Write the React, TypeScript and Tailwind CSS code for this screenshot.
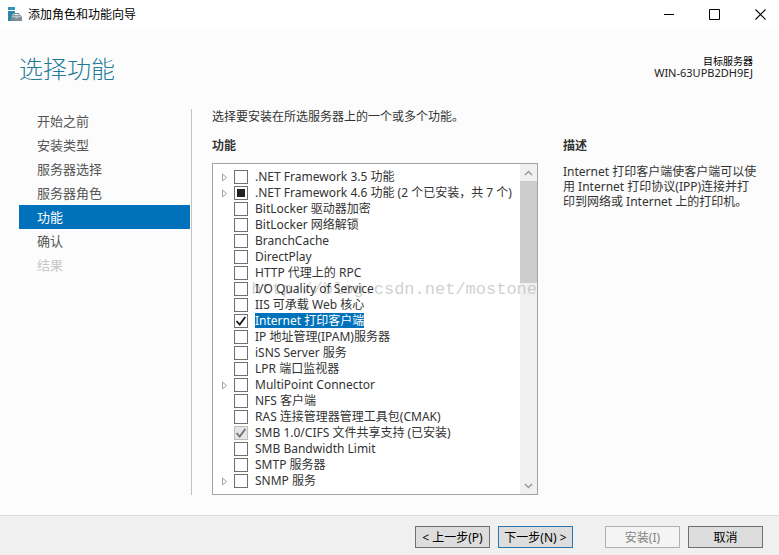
import { useEffect, useRef } from "react";

type Feature = {
  label: string;
  expandable?: boolean;
  checked?: boolean;
  partial?: boolean;
  installed?: boolean;
  selected?: boolean;
};

const steps = ["开始之前", "安装类型", "服务器选择", "服务器角色", "功能", "确认", "结果"];

const features: Feature[] = [
  { label: ".NET Framework 3.5 功能", expandable: true },
  { label: ".NET Framework 4.6 功能 (2 个已安装，共 7 个)", expandable: true, partial: true },
  { label: "BitLocker 驱动器加密" },
  { label: "BitLocker 网络解锁" },
  { label: "BranchCache" },
  { label: "DirectPlay" },
  { label: "HTTP 代理上的 RPC" },
  { label: "I/O Quality of Service" },
  { label: "IIS 可承载 Web 核心" },
  { label: "Internet 打印客户端", checked: true, selected: true },
  { label: "IP 地址管理(IPAM)服务器" },
  { label: "iSNS Server 服务" },
  { label: "LPR 端口监视器" },
  { label: "MultiPoint Connector", expandable: true },
  { label: "NFS 客户端" },
  { label: "RAS 连接管理器管理工具包(CMAK)" },
  { label: "SMB 1.0/CIFS 文件共享支持 (已安装)", checked: true, installed: true },
  { label: "SMB Bandwidth Limit" },
  { label: "SMTP 服务器" },
  { label: "SNMP 服务", expandable: true },
];

function WizardIcon() {
  return (
    <svg className="h-[15px] w-[15px]" viewBox="0 0 15 15" aria-hidden="true">
      <path d="M0 0h7v3H0z" fill="#2f93bd" />
      <path d="M0 4h7v1.5L4 8v6H0z" fill="#2a86ab" />
      <path d="M6 8V6.5h5V8" fill="none" stroke="#74858f" strokeWidth="1" />
      <path d="M4.5 8h8L14 10v4H3v-4z" fill="#7b8c96" />
      <path d="M4.8 8.8h7.4l1 1.4H9.5v1.3h-2v-1.3H3.8z" fill="#b9c5cb" />
    </svg>
  );
}

function FeatureRow({ feature, index }: { feature: Feature; index: number }) {
  const box = useRef<HTMLInputElement>(null);
  useEffect(() => {
    if (box.current) box.current.indeterminate = !!feature.partial;
  }, [feature.partial]);
  const id = `feature-${index}`;
  return (
    <li className="flex h-4 items-center">
      <span className="flex w-[21px] shrink-0 items-center pl-2">
        {feature.expandable && (
          <button type="button" aria-label={`展开 ${feature.label}`} className="block">
            <svg className="h-[9px] w-[7px]" viewBox="0 0 7 9" aria-hidden="true">
              <path d="M1.5 1v7L5.5 4.5z" fill="#fff" stroke="#a3a3a3" />
            </svg>
          </button>
        )}
      </span>
      <span className="grid size-[14px] shrink-0">
        <input
          ref={box}
          id={id}
          type="checkbox"
          defaultChecked={feature.checked}
          disabled={feature.installed}
          className="col-start-1 row-start-1 size-[14px] appearance-none border border-[#707070] bg-white disabled:border-[#bcbcbc] disabled:bg-[#e6e6e6]"
        />
        {(feature.checked || feature.partial) && (
          <svg className="pointer-events-none col-start-1 row-start-1 size-[14px]" viewBox="0 0 14 14" aria-hidden="true">
            {feature.partial ? (
              <path d="M3 3h8v8H3z" fill="#212121" />
            ) : (
              <path d="M2.5 7l3.2 3.5L11.3 3" fill="none" stroke={feature.installed ? "#707070" : "#1a1a1a"} strokeWidth="1.8" />
            )}
          </svg>
        )}
      </span>
      <label
        htmlFor={id}
        className={`ml-[7px] h-[15px] self-start whitespace-nowrap leading-4 ${feature.selected ? "bg-[#0072bc] text-white" : "text-[#333]"}`}
      >
        {feature.label}
      </label>
    </li>
  );
}

function ScrollBar() {
  return (
    <div className="flex w-[17px] shrink-0 flex-col bg-[#f0f0f0]">
      <button type="button" aria-label="向上滚动" className="flex h-[17px] items-center justify-center">
        <svg className="h-[6px] w-[9px]" viewBox="0 0 9 6" aria-hidden="true">
          <path d="M1 5l3.5-3.5L8 5" fill="none" stroke="#999" strokeWidth="1.5" />
        </svg>
      </button>
      <div className="h-[102px] bg-[#cdcdcd]" />
      <button type="button" aria-label="向下滚动" className="mt-auto flex h-[17px] items-center justify-center">
        <svg className="h-[6px] w-[9px]" viewBox="0 0 9 6" aria-hidden="true">
          <path d="M1 1l3.5 3.5L8 1" fill="none" stroke="#999" strokeWidth="1.5" />
        </svg>
      </button>
    </div>
  );
}

const windowButton = "flex h-[29px] w-[38px] items-center justify-center";
const buttonBase = "h-[22px] w-[75px] whitespace-nowrap border pt-px text-center leading-5";

export default function App() {
  return (
    <div className="flex min-h-screen flex-col bg-[#fcfcfc] font-['Noto_Sans','Noto_Sans_CJK_SC',sans-serif] text-xs text-[#333]">
      <header className="flex h-[29px] items-center bg-white pl-2 text-black">
        <WizardIcon />
        <span className="ml-[5px]">添加角色和功能向导</span>
        <div className="ml-auto flex gap-2">
          <button type="button" aria-label="最小化" className={windowButton}>
            <svg className="size-[11px]" viewBox="0 0 11 11" aria-hidden="true"><path d="M1 5.5h10" stroke="#000" /></svg>
          </button>
          <button type="button" aria-label="最大化" className={windowButton}>
            <svg className="size-[11px]" viewBox="0 0 11 11" aria-hidden="true"><path d="M.5.5h10v10H.5z" fill="none" stroke="#000" /></svg>
          </button>
          <button type="button" aria-label="关闭" className={windowButton}>
            <svg className="size-[11px]" viewBox="0 0 11 11" aria-hidden="true"><path d="M.5.5l10 10M10.5.5l-10 10" fill="none" stroke="#000" strokeWidth="1.1" /></svg>
          </button>
        </div>
      </header>

      <div className="flex h-20 items-center justify-between pl-[19px] pr-[26px]">
        <h1 className="text-2xl font-light text-[#1f7a99]">选择功能</h1>
        <div className="pb-1 text-right text-[#222]">
          <p className="text-[10px] leading-3 text-black">目标服务器</p>
          <p className="text-[11px] leading-3">WIN-63UPB2DH9EJ</p>
        </div>
      </div>

      <main className="flex grow pb-5 pl-[19px] pr-5">
        <nav className="w-[173px] shrink-0 border-r border-[#c3c3c3] pr-px text-[13px] text-[#555]">
          <ol>
            {steps.map((step) => (
              <li key={step}>
                <a
                  href="#step"
                  aria-current={step === "功能" ? "step" : undefined}
                  className={`block h-6 pl-[18px] leading-6 ${step === "功能" ? "bg-[#0072bc] text-white" : step === "结果" ? "text-[#c8c8c8]" : ""}`}
                >
                  {step}
                </a>
              </li>
            ))}
          </ol>
        </nav>

        <section className="ml-5 flex min-w-0 grow flex-col">
          <p className="h-[29px] whitespace-nowrap leading-[15px]">选择要安装在所选服务器上的一个或多个功能。</p>
          <h2 className="h-[25px] font-bold leading-[15px]">功能</h2>
          <div className="relative flex grow overflow-hidden border border-[#a3a3a3] bg-white">
            <span className="pointer-events-none absolute right-0 top-[116px] font-['Liberation_Mono',monospace] text-[17px] leading-5 text-[#bbb]/70">
              http://blog.csdn.net/mostone
            </span>
            <ul className="relative min-w-0 grow py-[5px]">
              {features.map((feature, index) => (
                <FeatureRow key={feature.label} feature={feature} index={index} />
              ))}
            </ul>
            <ScrollBar />
          </div>
        </section>

        <aside className="ml-[25px] w-[196px] shrink-0 pt-[29px]">
          <h2 className="h-[26px] font-bold leading-[15px]">描述</h2>
          <p className="leading-[15px]">
            Internet 打印客户端使客户端可以使用 Internet 打印协议(IPP)连接并打印到网络或 Internet 上的打印机。
          </p>
        </aside>
      </main>

      <footer className="flex h-10 items-start justify-end border-t border-[#dcdcdc] bg-[#f0f0f0] pr-4 pt-[10px] text-black">
        <button type="button" className={`${buttonBase} border-[#707070] bg-[#ddd]`}>{"< 上一步(P)"}</button>
        <button type="button" className={`${buttonBase} ml-2 border-[#2a76b0] bg-[#ddd]`}>{"下一步(N) >"}</button>
        <button type="button" disabled className={`${buttonBase} ml-8 border-[#adb2b5] bg-[#f4f4f4] text-[#838383]`}>安装(I)</button>
        <button type="button" className={`${buttonBase} ml-2 border-[#707070] bg-[#ddd]`}>取消</button>
      </footer>
    </div>
  );
}
